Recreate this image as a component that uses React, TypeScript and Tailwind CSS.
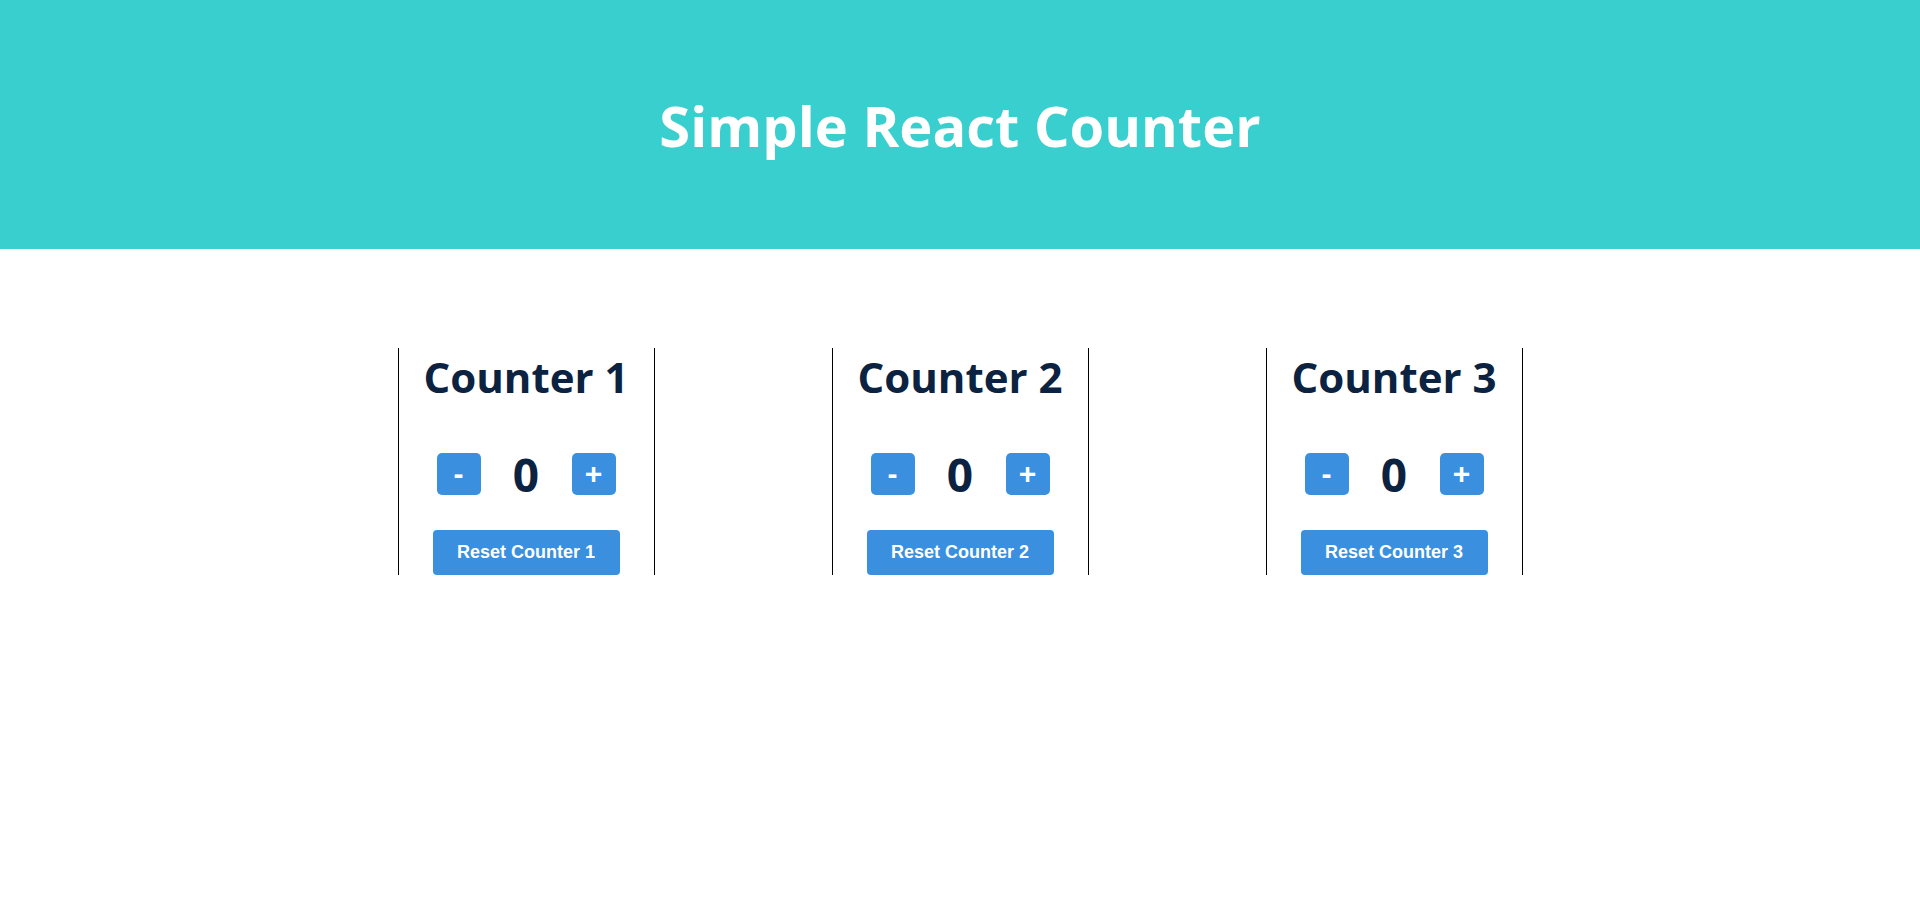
import React, { useState } from "react";

function Counter({ n }: { n: number }) {
  const [count, setCount] = useState(0);
  return (
    <div className="w-[257px] border-x border-black flex flex-col items-center pt-[8px]">
      <h2 className="text-[42px] leading-[42px] font-bold text-[#0b2241] font-['Open_Sans',sans-serif] whitespace-nowrap">
        Counter {n}
      </h2>
      <div className="mt-[53px] flex items-center h-[46px]">
        <button
          onClick={() => setCount(count - 1)}
          className="w-[44px] h-[42px] rounded-[5px] bg-[#3a8fde] text-white font-bold text-[30px] leading-none font-['Liberation_Sans',Arial,sans-serif] flex items-center justify-center"
        >
          -
        </button>
        <span className="w-[91px] text-center text-[46px] leading-[46px] font-bold text-[#0b2241] font-['Open_Sans',sans-serif]">
          {count}
        </span>
        <button
          onClick={() => setCount(count + 1)}
          className="w-[44px] h-[42px] rounded-[5px] bg-[#3a8fde] text-white font-bold text-[30px] leading-none font-['Liberation_Sans',Arial,sans-serif] flex items-center justify-center"
        >
          +
        </button>
      </div>
      <button
        onClick={() => setCount(0)}
        className="mt-[33px] w-[187px] h-[45px] rounded-[4px] bg-[#3a8fde] text-white font-bold text-[18px] font-['Liberation_Sans',Arial,sans-serif]"
      >
        Reset Counter {n}
      </button>
    </div>
  );
}

export default function App() {
  return (
    <div className="min-h-screen bg-white">
      <header className="h-[249px] bg-[#3acfcf] flex items-center justify-center">
        <h1 className="text-white font-bold text-[56px] leading-[56px] font-['Open_Sans',sans-serif]">
          Simple React Counter
        </h1>
      </header>
      <main className="mt-[99px] flex justify-center gap-[177px]">
        <Counter n={1} />
        <Counter n={2} />
        <Counter n={3} />
      </main>
    </div>
  );
}
